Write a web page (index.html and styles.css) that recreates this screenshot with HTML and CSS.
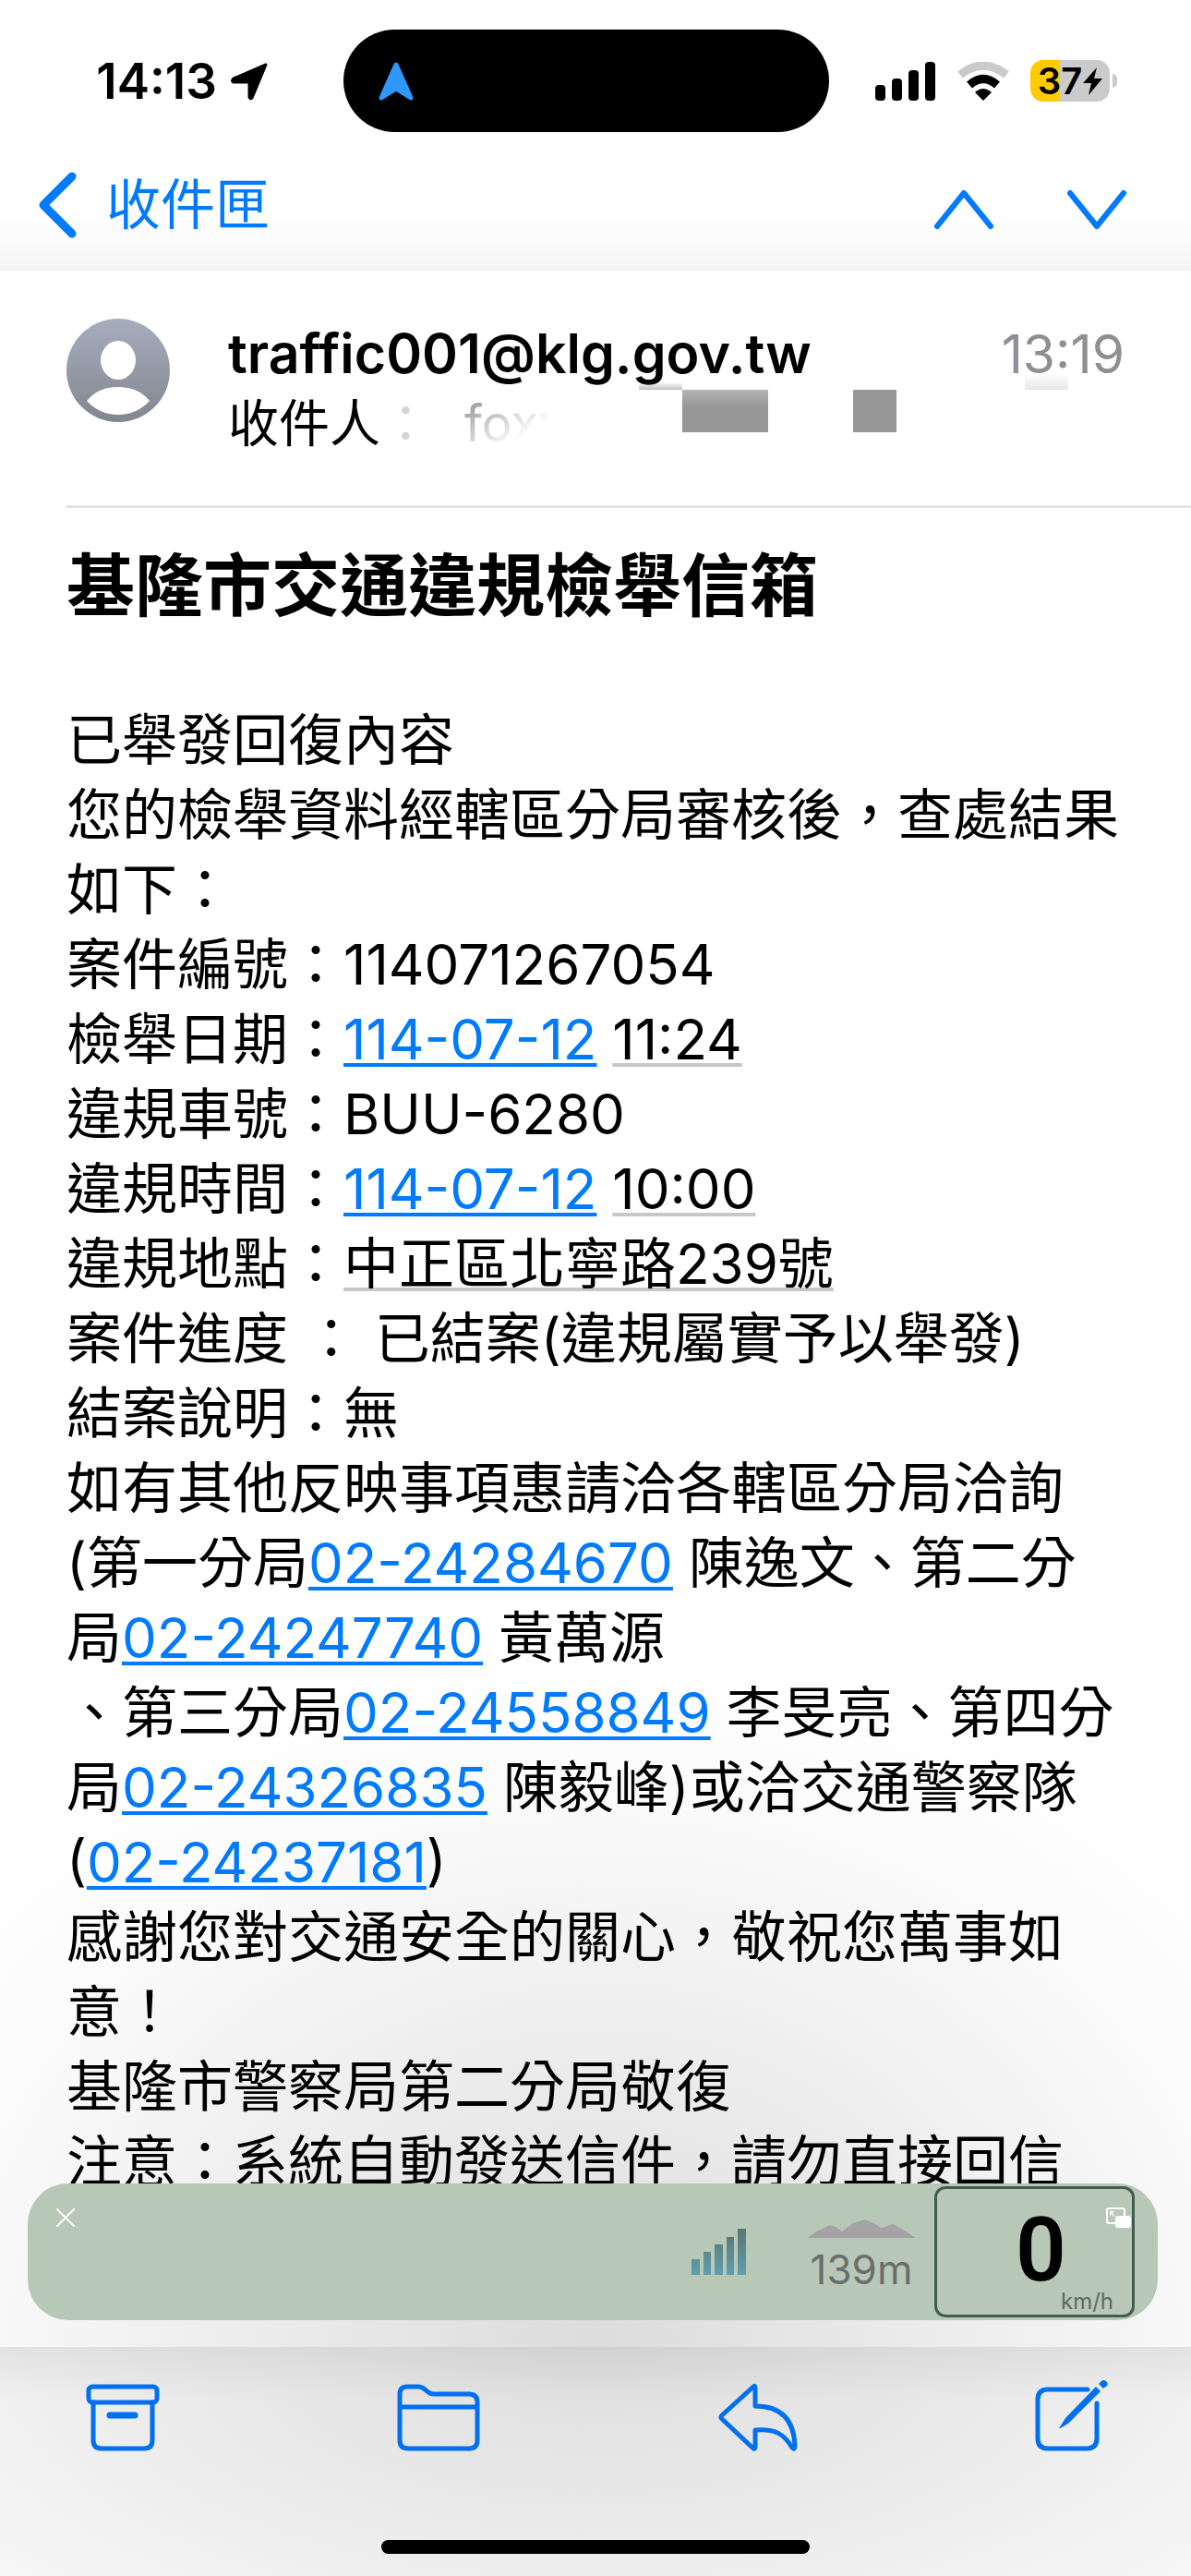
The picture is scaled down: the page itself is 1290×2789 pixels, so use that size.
FILE: index.html
```html
<!DOCTYPE html>
<html lang="zh-Hant">
<head>
    <meta charset="UTF-8">
    <meta name="viewport" content="width=device-width, initial-scale=1.0">
    <title>基隆市交通違規檢舉信箱</title>
    <link rel="stylesheet" href="styles.css">
</head>
<body>
    <div class="status">
        <div class="clock">
            <span>14:13</span>
            <svg width="42" height="42" viewBox="0 0 42 42"><path d="M39 3 L24 39 Q22 41 21 38 V23 Q21 22 20 22 H4 Q1 21 4 18 Z" fill="#000" stroke="#000" stroke-width="3" stroke-linejoin="round"/></svg>
        </div>
        <div class="island">
            <svg width="38" height="42" viewBox="0 0 38 42"><path d="M19 3 L35 39 L19 29 L3 39 Z" fill="#2f97ff" stroke="#2f97ff" stroke-width="5" stroke-linejoin="round"/></svg>
        </div>
        <div class="indicators">
            <svg width="66" height="42" viewBox="0 0 66 42">
                <rect x="0" y="25" width="11" height="17" rx="4"/>
                <rect x="18" y="18" width="11" height="24" rx="4"/>
                <rect x="36" y="9" width="11" height="33" rx="4"/>
                <rect x="54" y="0" width="11" height="42" rx="4"/>
            </svg>
            <svg width="58" height="42" viewBox="0 0 58 42" fill="none">
                <path d="M4 14 Q29 -6 54 14" stroke="#cbcbcb" stroke-width="9"/>
                <path d="M14 25 Q29 12 44 25" stroke="#000" stroke-width="9"/>
                <path d="M20 33 Q29 25 38 33 L29 42 Z" fill="#000"/>
            </svg>
            <div class="battery">
                <div class="charge">
                    <span>37</span>
                    <svg width="21" height="30" viewBox="0 0 21 30"><path d="M15 0 L0 17 H9 L6 30 L21 12 H12 Z"/></svg>
                </div>
                <div class="nub"></div>
            </div>
        </div>
    </div>

    <nav class="nav">
        <a href="#" class="back">
            <svg width="42" height="72" viewBox="0 0 42 72"><path d="M37 5 L6 36 L37 67"/></svg>
            <span>收件匣</span>
        </a>
        <div class="arrows">
            <button type="button" aria-label="上一封"><svg width="66" height="46" viewBox="0 0 66 46"><path d="M4 41 L33 5 L62 41"/></svg></button>
            <button type="button" aria-label="下一封"><svg width="66" height="46" viewBox="0 0 66 46"><path d="M4 5 L33 41 L62 5"/></svg></button>
        </div>
    </nav>

    <main class="message">
        <header class="sender">
            <svg class="avatar" width="112" height="112" viewBox="0 0 112 112">
                <defs>
                    <linearGradient id="grey" x1="0" y1="0" x2="0" y2="1">
                        <stop offset="0" stop-color="#a6adbd"/>
                        <stop offset="1" stop-color="#82868f"/>
                    </linearGradient>
                </defs>
                <circle cx="56" cy="56" r="56" fill="url(#grey)"/>
                <ellipse cx="56" cy="45" rx="19" ry="21" fill="#fff"/>
                <path d="M22 89 Q34 74 56 74 Q78 74 90 89 Q76 104 56 104 Q36 104 22 89 Z" fill="#fff"/>
            </svg>
            <div class="who">
                <div class="from">
                    <span class="address">traffic001@klg.gov.tw</span>
                    <time>13:19</time>
                </div>
                <div class="to">收件人<span class="faint">：</span><span class="faded">foxy</span></div>
                <div class="mask wide"></div>
                <div class="mask small"></div>
                <div class="smudge dark"></div>
                <div class="smudge light"></div>
            </div>
        </header>

        <article class="mail">
            <h1>基隆市交通違規檢舉信箱</h1>
            <p>已舉發回復內容</p>
            <p>您的檢舉資料經轄區分局審核後，查處結果如下：</p>
            <p>案件編號：114071267054</p>
            <p>檢舉日期：<a href="#">114-07-12</a> <span class="detected">11:24</span></p>
            <p>違規車號：BUU-6280</p>
            <p>違規時間：<a href="#">114-07-12</a> <span class="detected">10:00</span></p>
            <p>違規地點：<span class="detected">中正區北寧路239號</span></p>
            <p>案件進度 ： 已結案(違規屬實予以舉發)</p>
            <p>結案說明：無</p>
            <p>如有其他反映事項惠請洽各轄區分局洽詢</p>
            <p>(第一分局<a href="tel:0224284670">02-24284670</a> 陳逸文、第二分局<a href="tel:0224247740">02-24247740</a> 黃萬源</p>
            <p>、第三分局<a href="tel:0224558849">02-24558849</a> 李旻亮、第四分局<a href="tel:0224326835">02-24326835</a> 陳毅峰)或洽交通警察隊(<a href="tel:0224237181">02-24237181</a>)</p>
            <p>感謝您對交通安全的關心，敬祝您萬事如意！</p>
            <p>基隆市警察局第二分局敬復</p>
            <p>注意：系統自動發送信件，請勿直接回信</p>
        </article>

        <!-- floating speed widget -->
        <aside class="pip">
            <button type="button" class="close" aria-label="關閉"><svg width="20" height="20" viewBox="0 0 20 20"><path d="M1 1 L19 19 M19 1 L1 19"/></svg></button>
            <svg class="gps" width="60" height="50" viewBox="0 0 60 50">
                <defs>
                    <linearGradient id="teal" gradientUnits="userSpaceOnUse" x1="0" y1="0" x2="0" y2="50">
                        <stop offset="0" stop-color="#5b7573"/>
                        <stop offset="1" stop-color="#5f9fae"/>
                    </linearGradient>
                </defs>
                <path fill="url(#teal)" d="M0 33h9v17h-9z M13 25h8v25h-8z M25 17h9v33h-9z M38 9h8v41h-8z M50 0h9v50h-9z"/>
            </svg>
            <div class="altitude">
                <svg width="118" height="20" viewBox="0 0 118 20"><path d="M0 20 L12 12 L25 6 L31 8 L38 13 L50 4 L63 0 L72 4 L81 9 L93 5 L106 12 L118 20 Z" fill="#a5a3a5"/></svg>
                <span>139m</span>
            </div>
            <div class="speed">
                <strong>0</strong>
                <span>km/h</span>
                <svg class="expand" width="27" height="22" viewBox="0 0 27 22">
                    <rect x="1" y="1" width="19" height="16" rx="2" fill="none" stroke="#fff" stroke-width="2"/>
                    <path d="M4 4h5l-2 2 2 3-1 1-2-3-2 2z" fill="#fff"/>
                    <rect x="10" y="9" width="17" height="13" rx="3" fill="#fff"/>
                </svg>
            </div>
        </aside>
    </main>

    <footer class="toolbar">
        <div class="tools">
            <button type="button" aria-label="封存">
                <svg width="80" height="80" viewBox="0 0 80 80">
                    <rect x="3" y="8" width="74" height="17" rx="4"/>
                    <path d="M8 25 V66 Q8 75 17 75 H63 Q72 75 72 66 V25"/>
                    <path d="M26 39 H53" stroke-width="7"/>
                </svg>
            </button>
            <button type="button" aria-label="移動">
                <svg width="90" height="80" viewBox="0 0 90 80">
                    <path d="M3 66 V16 Q3 8 11 8 H23 Q27 8 30 11 L34 14 Q36 16 40 16 H78 Q87 16 87 25 V66 Q87 75 78 75 H12 Q3 75 3 66 Z M3 30 H87"/>
                </svg>
            </button>
            <button type="button" aria-label="回覆">
                <svg width="86" height="80" viewBox="0 0 86 80">
                    <path d="M38 8 L4 39 Q2 41 4 43 L38 75 Q40 76 40 73 V55 C61 53 71 59 80 74 Q83 77 83 72 C82 46 70 29 40 29 V10 Q40 6 38 8 Z"/>
                </svg>
            </button>
            <button type="button" aria-label="撰寫">
                <svg width="80" height="80" viewBox="0 0 80 80">
                    <path d="M57 11 H14 Q3 11 3 22 V64 Q3 75 14 75 H56 Q67 75 67 64 V26"/>
                    <path class="pen" d="M66 8 L33 42 L26 53 Q27 54 37 47 L71 13 Z M69 5 L72 2 Q74 0 77 2 Q80 5 78 7 L74 10 Z"/>
                </svg>
            </button>
        </div>
        <div class="home"></div>
    </footer>
</body>
</html>
```
FILE: styles.css
```css
* {
    box-sizing: border-box;
}

body {
    display: flex;
    flex-direction: column;
    min-height: 100vh;
    margin: 0;
    font-family: Inter, "Noto Sans CJK TC", sans-serif;
    background: white;
    color: black;
}

button {
    display: flex;
    padding: 0;
    border: 0;
    background: none;
}

a {
    color: #007aff;
}

/* status bar */
.status {
    display: grid;
    grid-template-columns: 1fr 526px 1fr;
    align-items: center;
    padding: 32px 20px 0 0;
}

.clock {
    display: flex;
    align-items: center;
    justify-content: flex-end;
    gap: 14px;
    padding-right: 81px;
    font-size: 53px;
    font-weight: 600;
    line-height: 60px;
}

.island {
    display: flex;
    align-items: center;
    height: 111px;
    padding-left: 38px;
    border-radius: 56px;
    background: black;
}

.indicators {
    display: flex;
    align-items: center;
    gap: 22px;
    padding-left: 50px;
}

.battery {
    display: flex;
    align-items: center;
    gap: 3px;
}

.charge {
    display: flex;
    align-items: center;
    justify-content: center;
    gap: 1px;
    width: 86px;
    height: 45px;
    border-radius: 14px;
    background: linear-gradient(to right, #ffcc00 37%, #cbcbcb 37%);
    font-size: 40px;
    font-weight: 600;
    line-height: 45px;
}

.nub {
    width: 5px;
    height: 15px;
    border-radius: 0 6px 6px 0;
    background: #cbcbcb;
}

/* navigation */
.nav {
    display: flex;
    align-items: center;
    justify-content: space-between;
    height: 150px;
    padding: 18px 69px 0 41px;
    background: linear-gradient(to bottom, white 60%, #f5f5f5);
}

.nav svg {
    fill: none;
    stroke: #007aff;
    stroke-width: 6;
    stroke-linecap: round;
    stroke-linejoin: round;
}

.back {
    display: flex;
    align-items: center;
    gap: 32px;
    padding-bottom: 10px;
    font-size: 59px;
    line-height: 76px;
    text-decoration: none;
}

.nav .back svg {
    stroke-width: 9;
}

.arrows {
    display: flex;
    gap: 78px;
}

/* message */
.message {
    position: relative;
    flex: 1;
    background: radial-gradient(ellipse 900px 760px at 50% 100%, #dcdcdc, #e7e7e7 28%, #f2f2f2 56%, #fbfbfb 80%, white);
}

.sender {
    display: flex;
    gap: 63px;
    margin-left: 72px;
    padding: 52px 72px 53px 0;
    border-bottom: 3px solid #e3e3e3;
}

.who {
    position: relative;
    flex: 1;
}

.from {
    display: flex;
    align-items: baseline;
    justify-content: space-between;
    line-height: 76px;
}

.address {
    font-size: 59px;
    font-weight: 600;
}

time {
    font-size: 57px;
    color: #8e8e93;
}

.to {
    font-size: 55px;
    line-height: 72px;
}

.faint {
    color: #d4d4d4;
}

.faded {
    margin-left: 36px;
    background: linear-gradient(to bottom right, #888, white 65%);
    background-clip: text;
    color: transparent;
}

.mask {
    position: absolute;
    top: 77px;
    height: 46px;
    background: #979797;
}

.mask.wide {
    left: 492px;
    width: 93px;
    background: linear-gradient(to bottom, #b4b4b4, #979797 40%);
}

.mask.small {
    left: 677px;
    width: 47px;
}

.smudge {
    position: absolute;
    width: 47px;
}

.smudge.dark {
    top: 69px;
    left: 445px;
    height: 8px;
    background: linear-gradient(to bottom, transparent, #8888);
}

.smudge.light {
    top: 59px;
    left: 863px;
    height: 18px;
    background: linear-gradient(to bottom, transparent, #e8e8ea);
}

.mail {
    padding: 34px 72px 0;
    font-size: 60px;
    line-height: 81px;
}

.mail h1 {
    margin: 0 0 77px;
    font-size: 74px;
    line-height: 100px;
}

.mail p {
    margin: 0;
}

.mail a,
.detected {
    white-space: nowrap;
    text-decoration: underline;
    text-decoration-thickness: 4px;
    text-decoration-skip-ink: none;
    text-underline-offset: 4px;
}

.detected {
    text-decoration-color: #c8c8c8;
}

/* floating widget */
.pip {
    position: absolute;
    right: 36px;
    bottom: 29px;
    left: 30px;
    display: flex;
    align-items: center;
    height: 148px;
    padding-right: 25px;
    border-radius: 44px;
    background: #b7c8b7;
}

.close {
    align-self: flex-start;
    margin: 27px auto 0 31px;
}

.close svg {
    fill: none;
    stroke: white;
    stroke-width: 2;
    stroke-linecap: round;
}

.altitude {
    display: flex;
    flex-direction: column;
    align-items: center;
    gap: 8px;
    margin: 10px 20px 0 65px;
    font-size: 44px;
    line-height: 52px;
    color: #6b6e6b;
}

.speed {
    position: relative;
    display: flex;
    flex-direction: column;
    align-items: flex-end;
    width: 217px;
    height: 142px;
    padding: 14px 20px 0 0;
    border: 3px solid #405c4b;
    border-radius: 12px;
}

.speed strong {
    width: 106px;
    font-family: Roboto, sans-serif;
    font-size: 96px;
    font-weight: 600;
    line-height: 104px;
}

.speed span {
    margin-top: -10px;
    font-size: 24px;
    line-height: 28px;
    color: #5f6a61;
}

.expand {
    position: absolute;
    top: 20px;
    right: 1px;
}

/* bottom toolbar */
.toolbar {
    display: flex;
    flex-direction: column;
    align-items: center;
    justify-content: space-between;
    height: 248px;
    padding: 35px 0 24px;
    background:
        linear-gradient(to bottom, #0000000f, transparent 24%),
        radial-gradient(ellipse 900px 400px at 50% 0, #dedede, #e9e9e9 45%, #f8f8f8);
}

.tools {
    display: flex;
    justify-content: space-between;
    width: 100%;
    padding: 0 89px 0 93px;
}

.tools svg {
    fill: none;
    stroke: #0070f0;
    stroke-width: 5;
    stroke-linejoin: round;
    stroke-linecap: round;
}

.tools .pen {
    fill: #0070f0;
    stroke: none;
}

.home {
    width: 36%;
    height: 15px;
    border-radius: 8px;
    background: black;
}
```
